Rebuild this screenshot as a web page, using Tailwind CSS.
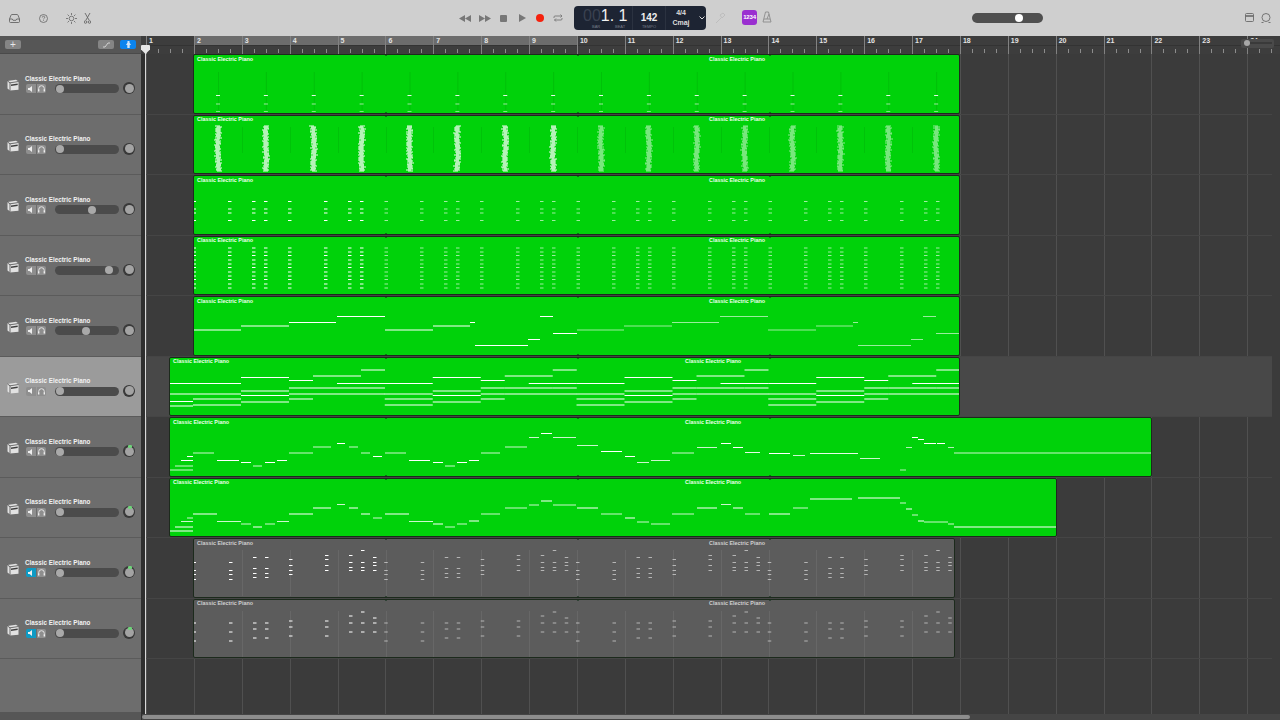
<!DOCTYPE html>
<html lang="en">
<head>
    <meta charset="UTF-8">
    <meta name="viewport" content="width=device-width, initial-scale=1.0">
    <title>GarageBand - Classic Electric Piano</title>
    <script src="https://cdn.jsdelivr.net/npm/@tailwindcss/browser@4"></script>
</head>
<body class="bg-[#3b3b3b] font-['Liberation_Sans',Arial,sans-serif] overflow-hidden">

<div class="w-[1280px] h-[720px] flex flex-col overflow-hidden">

    <!-- Top toolbar -->
    <header class="h-9 shrink-0 bg-[#cfcfcf] flex items-center relative">
        <div class="flex items-center text-[#666]">
            <svg class="ml-[9px]" width="11" height="9" viewBox="0 0 11 9" fill="none" stroke="currentColor" stroke-width="0.9"><path d="M.5 5 2 1.2Q2.3.5 3 .5h5q.7 0 1 .7L10.5 5v2.500q0 1-1 1h-8q-1 0-1-1Z"/><path d="M.5 5h2.800l.7 1.300h3L7.700 5h2.800"/></svg>
            <svg class="ml-[19px]" width="9" height="9" viewBox="0 0 9 9" fill="none" stroke="currentColor" stroke-width="0.8"><circle cx="4.500" cy="4.500" r="4"/><path d="M3.300 3.500Q3.400 2.200 4.500 2.200T5.700 3.400Q5.700 4 4.900 4.500 4.500 4.800 4.500 5.400M4.500 6.300v.7"/></svg>
            <svg class="ml-[18px]" width="11" height="11" viewBox="0 0 11 11" fill="none" stroke="currentColor" stroke-width="0.8"><circle cx="5.500" cy="5.500" r="2.300"/><path d="M5.500 0v2M5.500 9v2M0 5.500h2M9 5.500h2M1.600 1.600 3 3M8 8l1.400 1.400M1.600 9.400 3 8M8 3l1.400-1.400"/></svg>
            <svg class="ml-[7px]" width="7" height="11" viewBox="0 0 7 11" fill="none" stroke="currentColor" stroke-width="0.9"><path d="M1 0 5 7M6 0 2 7"/><circle cx="1.500" cy="9" r="1.300"/><circle cx="5.500" cy="9" r="1.300"/></svg>
        </div>

        <!-- Transport -->
        <div class="absolute left-[459px] top-0 h-9 flex items-center">
            <svg class="mr-[8px]" width="12" height="7" viewBox="0 0 12 7" fill="#777"><path d="M6 0v7L0 3.500ZM12 0v7L6 3.500Z"/></svg>
            <svg class="mr-[9px]" width="12" height="7" viewBox="0 0 12 7" fill="#777"><path d="M0 0v7l6-3.500ZM6 0v7l6-3.500Z"/></svg>
            <div class="w-[7px] h-[7px] bg-[#777] rounded-[1px] mr-[12px]"></div>
            <svg class="mr-[10px]" width="7" height="8" viewBox="0 0 7 8" fill="#777"><path d="M0 0v8l7-4Z"/></svg>
            <div class="w-2 h-2 bg-[#f5210d] rounded-full mr-[9px]"></div>
            <svg width="10" height="8" viewBox="0 0 10 8" fill="none" stroke="#777" stroke-width="0.9"><path d="M1 4V3q0-1 1-1h6.500M7.500.5 9 2 7.500 3.500M9 4v1q0 1-1 1H1.500M3 4.500 1.500 6 3 7.500"/></svg>
        </div>

        <!-- LCD -->
        <div class="absolute left-[574px] top-[6px] w-[132px] h-6 rounded-[4px] bg-[#1d2433] flex text-white">
            <div class="w-[59px] relative border-r border-[#2b3240]">
                <div class="absolute left-[9px] top-[1px] text-[16px] leading-[18px] whitespace-nowrap"><span class="text-[#3a4150]">00</span><span class="text-[#f1f1f1]">1. 1</span></div>
                <span class="absolute left-[18px] bottom-[1px] text-[4px] leading-[5px] text-[#757b88]">BAR</span>
                <span class="absolute left-[41px] bottom-[1px] text-[4px] leading-[5px] text-[#757b88]">BEAT</span>
            </div>
            <div class="w-[33px] relative border-r border-[#2b3240] text-center">
                <div class="text-[10px] leading-[11px] mt-[6px] font-bold text-[#eee]">142</div>
                <div class="text-[4px] leading-[5px] mt-[1px] text-[#757b88]">TEMPO</div>
            </div>
            <div class="w-[30px] text-center text-[7px] leading-[9px] mt-[2px] font-bold text-[#ddd]">
                <div>4/4</div>
                <div class="mt-px">Cmaj</div>
            </div>
            <svg class="mt-[10px] ml-[3px]" width="6" height="4" viewBox="0 0 6 4" fill="none" stroke="#ddd" stroke-width="1"><path d="M.5.5 3 3 5.500.5"/></svg>
        </div>

        <svg class="absolute left-[715px] top-[12px]" width="11" height="12" viewBox="0 0 11 12" fill="none" stroke="#bbb" stroke-width="0.9"><path d="M1 11 6 6M5 3l3-2 2 2-3 3Z"/></svg>
        <div class="absolute left-[742px] top-[10px] w-[15px] h-[15px] rounded-[3px] bg-[#9a2fd0] flex items-center justify-center text-[6px] font-bold text-white tracking-tight">1234</div>
        <svg class="absolute left-[762px] top-[11px]" width="10" height="12" viewBox="0 0 10 12" fill="none" stroke="#8b8b8b" stroke-width="0.9"><path d="M3.500 1h3L9 11H1ZM2 8h6M5 8l2-5"/></svg>

        <!-- Master volume -->
        <div class="absolute left-[972px] top-[13px] w-[71px] h-[10px] rounded-full bg-[#4f4f4f]">
            <div class="absolute left-[43px] top-[1px] w-2 h-2 rounded-full bg-white"></div>
        </div>

        <svg class="absolute left-[1245px] top-[13px]" width="9" height="9" viewBox="0 0 9 9" fill="none" stroke="#6a6a6a" stroke-width="0.9"><rect x=".5" y=".5" width="8" height="8" rx="1"/><path d="M.5 3h8" stroke-width="1.600"/></svg>
        <svg class="absolute left-[1261px] top-[13px]" width="10" height="10" viewBox="0 0 10 10" fill="none" stroke="#6a6a6a" stroke-width="0.9"><circle cx="5" cy="4.500" r="4"/><path d="M.5 9.500h2M7.500 9.500h2"/></svg>
    </header>

    <main class="flex-1 flex min-h-0">

        <!-- Track headers -->
        <aside class="w-[141px] shrink-0 bg-[#6d6d6d] flex flex-col">
            <div class="h-[18px] shrink-0 bg-[#565656] flex items-center border-b border-[#4a4a4a]">
                <div class="ml-[5px] w-4 h-[9px] rounded-[2px] bg-[#858585] text-[#e8e8e8] text-[10px] leading-[9px] text-center">+</div>
                <div class="ml-[77px] w-4 h-[9px] rounded-[2px] bg-[#858585] flex items-center justify-center">
                    <svg width="9" height="6" viewBox="0 0 9 6" fill="none" stroke="#e5e5e5" stroke-width="0.8"><path d="M1 5h2l3-4h2"/></svg>
                </div>
                <div class="ml-[6px] w-4 h-[9px] rounded-[2px] bg-[#0a84ee] flex items-center justify-center">
                    <svg width="7" height="7" viewBox="0 0 7 7" fill="#cfe4f7"><path d="M2.500 0h2v1.500L6 4H4.700v3H2.300V4H1l1.500-2.500Z"/></svg>
                </div>
            </div>
            <div id="trackHeaders" class="flex-1 min-h-0"></div>
            <div class="h-2 shrink-0 bg-[#565656]"></div>
        </aside>

        <!-- Timeline -->
        <section class="flex-1 relative flex flex-col min-w-0">
            <!-- Ruler -->
            <div class="h-[18px] shrink-0 bg-[#3d3d3d] relative overflow-hidden">
                <div class="absolute left-[53px] top-0 w-[383px] h-[9px] bg-[#6c6c6c]"></div>
                <div class="absolute left-0 right-0 top-[9px] h-px bg-[#333]"></div>
                <div id="ruler" class="absolute left-[5px] top-0 flex h-full"></div>
                <!-- Zoom slider over the ruler -->
                <div class="absolute left-[1100px] top-[3px] w-[33px] h-[9px] rounded-[2px] bg-[#4a4a4a]">
                    <div class="absolute left-[9px] top-[3px] w-[22px] h-[2px] bg-[#3a3a3a]"></div>
                    <div class="absolute left-[3px] top-[1px] w-[6px] h-[6px] rounded-full bg-[#a8a8a8]"></div>
                </div>
            </div>

            <!-- Arrange area -->
            <div class="flex-1 relative bg-[#3b3b3b] min-h-0 overflow-hidden">
                <div id="gridLines" class="absolute left-[5px] top-0 bottom-0 flex"></div>
                <div id="lanes" class="relative w-[1131px]"></div>
                <div class="absolute left-0 top-0 bottom-0 w-[4.500px] bg-[#2f2f2f]"></div>
                <div class="absolute left-[1px] right-0 bottom-0 h-[6px] bg-[#454545]">
                    <div class="absolute left-0 top-[1px] w-[828px] h-1 rounded-full bg-[#8d8d8d]"></div>
                </div>
            </div>

            <!-- Playhead -->
            <div class="absolute left-[4px] top-[9px] bottom-[6px] w-px bg-[#d8d8d8]"></div>
            <svg class="absolute left-0 top-[9px]" width="9" height="9" viewBox="0 0 9 9" fill="#e6e6e6"><path d="M0 1q0-1 1-1h7q1 0 1 1v3.500L4.500 9 0 4.500Z"/></svg>
        </section>
    </main>
</div>

<script>
    const BAR = 47.875;
    const ROW = 60.5;
    const TOP = 54;
    const knobs = [60, 60, 92, 109, 86, 60, 60, 60, 60, 60];

    // Track headers
    const pianoIcon = `<svg width="12" height="12" viewBox="0 0 12 12"><path d="M.5 2 9 .8l2.500 1.700v8.200L3 11.500.5 9.500Z" fill="#e2e2e2"/><path d="M3 3.800 11.500 2.500M3 3.800v7.700M.5 2 3 3.800" stroke="#3a3a3a" stroke-width="0.7" fill="none"/><path d="M4 5.500 10.700 4.600V6L4 7Z" fill="#3f3f3f"/></svg>`;
    const muteIcon = (c) => `<svg width="6" height="6" viewBox="0 0 6 6" fill="${c}"><path d="M0 2h1.500L4 0v6L1.500 4H0Z"/></svg>`;
    const phones = `<svg width="7" height="7" viewBox="0 0 7 7" fill="none" stroke="#eee" stroke-width="0.9"><path d="M.7 5V3.500a2.800 2.800 0 0 1 5.600 0V5"/><path d="M.7 4.500v2M6.300 4.500v2" stroke-width="1.400"/></svg>`;

    document.getElementById('trackHeaders').innerHTML = knobs.map((knob, i) => {
        const selected = i === 5;
        const pan = i >= 6;
        const muted = i >= 8;
        return `
        <div class="h-[60.5px] relative border-b border-[#5b5b5b] ${selected ? 'bg-[#9b9b9b]' : ''}">
            <div class="absolute left-[7px] top-[25px]">${pianoIcon}</div>
            <div class="absolute left-[25px] top-[20.500px] text-[6.300px] leading-[8px] font-bold text-[#f2f2f2] whitespace-nowrap">Classic Electric Piano</div>
            <div class="absolute left-[26px] top-[30px] w-[20px] h-[9px] flex rounded-[2px] overflow-hidden">
                <div class="w-[10px] flex items-center justify-center ${muted ? 'bg-[#0e9ac4]' : 'bg-[#8e8e8e]'}">${muteIcon('#eee')}</div>
                <div class="w-[10px] ml-px flex items-center justify-center bg-[#8e8e8e]">${phones}</div>
            </div>
            <div class="absolute left-[55px] top-[30px] w-[64px] h-[9px] rounded-full bg-[#4b4b4b]">
                <div class="absolute top-[0.500px] w-2 h-2 rounded-full bg-[#a9a9a9]" style="left:${knob - 59}px"></div>
            </div>
            <div class="absolute left-[123px] top-[28px] w-[12px] h-[12px] rounded-full bg-[#393939] flex items-center justify-center">
                <div class="w-[9px] h-[9px] rounded-full bg-[#a3a3a3]"></div>
                ${pan ? '<div class="absolute left-[5px] top-0 w-[4px] h-[3px] rounded-[1px] bg-[#6fd47a]"></div>' : ''}
            </div>
        </div>`;
    }).join('');

    // Ruler and bar lines
    let ruler = '', grid = '';
    for (let bar = 1; bar <= 24; bar++) {
        ruler += `
        <div class="w-[47.875px] shrink-0 relative border-l border-[#828282] h-full">
            <span class="absolute left-[2px] top-[0.500px] text-[7px] leading-[8px] font-bold text-[#e4e4e4]">${bar}</span>
            <div class="absolute left-[11px] bottom-[1px] w-px h-1 bg-[#8c8c8c]"></div>
            <div class="absolute left-[23px] bottom-[1px] w-px h-1 bg-[#8c8c8c]"></div>
            <div class="absolute left-[35px] bottom-[1px] w-px h-1 bg-[#8c8c8c]"></div>
        </div>`;
        grid += `<div class="w-[47.875px] shrink-0 border-l border-[#505050]"></div>`;
    }
    document.getElementById('ruler').innerHTML = ruler;
    document.getElementById('gridLines').innerHTML = grid;

    // Notes as [x1, x2, y, opacity] in page pixels
    const repeat = (xs, ys, period, count, w = 3.500) => {
        const out = [];
        for (let c = 0; c < count; c++) {
            xs.forEach(x => ys.forEach(y => out.push([x + c * period, x + c * period + w, y, c === 0 ? 1 : 0.62])));
        }
        return out;
    };
    const clusterX = [192.5, 228, 252, 264, 288, 324, 348, 360];

    const track1 = [];
    for (let i = 0; i < 16; i++) {
        const x = 216 + i * BAR;
        track1.push([x, x + 4, 95, 0.9], [x, x + 4, 103.5, 0.6], [x, x + 4, 111, 0.5]);
    }

    const track2 = [];
    for (let i = 0; i < 16; i++) {
        for (let y = 125; y < 171; y++) {
            // mostly straight stack of notes with a little jitter
            const wob = Math.sin(y * 0.16 + i * 1.7) * 0.5 + Math.sin(y * 2.3 + i * 3) * 0.9 + Math.sin(y * 5.1 + i) * 0.5;
            const x = Math.round(215.5 + i * BAR + wob);
            track2.push([x, x + 5, y, i < 8 ? 0.92 : 0.55]);
        }
    }

    const track3 = repeat(clusterX, [201, 208.5, 212.5, 220], 192, 4);
    const track4 = repeat(clusterX, [247, 251, 254.5, 259, 263, 266.5, 271, 275, 278.5, 283, 287], 192, 4);

    const melody5 = [[194, 241, 329.5], [241, 289, 325.5], [289, 336, 322], [337, 385, 316], [385, 433, 329.5], [433, 470, 325.5], [470, 475, 322], [475, 528, 345], [528, 540, 339], [540, 553, 316], [553, 577, 333]];
    const track5 = melody5.flatMap(n => [[n[0], n[1], n[2], 1], [n[0] + 383, Math.min(n[1] + 383, 960), n[2], 0.6]]);

    const chords6 = [[193, 241, 382.5], [193, 241, 393], [193, 241, 398], [193, 241, 404], [241, 289, 376.5], [241, 289, 390], [241, 289, 394.5], [241, 289, 401], [289, 313, 379.5], [289, 313, 387], [289, 313, 393], [289, 313, 398], [313, 361, 375], [313, 361, 387], [313, 385, 393], [337, 385, 382.5], [361, 385, 369], [361, 385, 387]];
    const track6 = [[170, 193, 382.5, 1], [170, 193, 393, 1], [170, 193, 400.5, 1], [170, 193, 405, 1]];
    for (let c = 0; c < 4; c++) chords6.forEach(n => track6.push([n[0] + c * 191.75, Math.min(n[1] + c * 191.75, 960), n[2], 1]));

    const track7 = [[170, 193, 469.5, .8], [175, 193, 465.5, .8], [181, 193, 460, 1], [187, 193, 456, 1], [193, 214, 452.5, .8], [217, 239, 460, 1], [241, 251, 462, 1], [253, 262, 465.5, .8], [265, 275, 462, 1], [277, 287, 460, 1], [289, 313, 452.5, .8], [313, 331, 446.5, .8], [337, 345, 443, 1], [349, 358, 446.5, .8], [361, 370, 452.5, .8], [373, 382, 456, 1], [385, 406, 452.5, .8], [409, 430, 460, 1], [433, 443, 462, 1], [445, 455, 465.5, .8], [457, 467, 462, 1], [469, 479, 460, 1], [481, 500, 452.5, .8], [505, 527, 446.5, .8], [529, 539, 437, .8], [541, 552, 433, 1], [553, 576, 437, .8], [577, 598, 445, .8], [601, 622, 451, 1], [625, 635, 456, 1], [637, 649, 462, .8], [651, 670, 460, .8], [672, 694, 452.5, .8], [697, 717, 447, .8], [721, 731, 443, 1], [733, 743, 447, 1], [745, 760, 452, .9], [769, 790, 453, 1], [793, 805, 455, .8], [810, 858, 453, .9], [860, 880, 458, .8], [900, 906, 469.5, .7], [906, 912, 447, .7], [912, 918, 437, 1], [918, 924, 439, 1], [924, 936, 443, 1], [937, 945, 443, 1], [948, 954, 447, .7], [954, 1151, 452.5, .8]];

    const track8 = [[170, 193, 530, 1], [175, 193, 526, 1], [181, 193, 520.5, .8], [187, 193, 517, .8], [193, 217, 513, 1], [217, 241, 520.5, .8], [241, 251, 523, .8], [253, 262, 526, 1], [265, 275, 523, .8], [277, 289, 520.5, .8], [289, 313, 513, 1], [313, 331, 507, 1], [337, 345, 503.5, .8], [349, 358, 507, 1], [361, 370, 513, 1], [373, 382, 517, .8], [385, 409, 513, 1], [409, 433, 520.5, .8], [433, 443, 523, 1], [445, 455, 526, .8], [457, 467, 523, .8], [469, 479, 520, 1], [481, 500, 513, .8], [505, 527, 507, .8], [529, 539, 504, .8], [541, 552, 500, 1], [553, 576, 504, .8], [577, 598, 507, 1], [601, 622, 513, .8], [625, 635, 517, 1], [637, 649, 521, .8], [651, 670, 523, .8], [672, 694, 513, .8], [697, 717, 507, 1], [721, 731, 503.5, .8], [733, 743, 507, 1], [745, 760, 513, .8], [769, 790, 513, 1], [793, 808, 507, .8], [810, 852, 498, 1], [858, 900, 497, 1], [900, 906, 502, .8], [906, 912, 508, 1], [912, 918, 514, .8], [918, 924, 520, 1], [924, 948, 521, .8], [948, 954, 523, .8], [954, 1056, 526, 1]];

    const clusters9 = [[192.5, [562, 570, 574, 579]], [229, [562, 570, 574, 579]], [253, [557, 568, 573, 577]], [265, [557, 568, 573, 577]], [289, [559, 565, 570, 574]], [325, [555, 559, 565, 570]], [349, [555, 562, 567, 570]], [361, [550, 562, 567, 570]], [373, [557, 562, 565, 570]]];
    const clusters10 = [[192.5, [622, 631, 640]], [229, [622, 631, 640]], [253, [622, 628, 637]], [265, [622, 628, 637]], [289, [620, 626, 635]], [325, [620, 626, 635]], [349, [615, 622, 631]], [361, [611, 622, 631]], [373, [617, 622, 631]]];
    const spread = (clusters) => {
        const out = [];
        for (let c = 0; c < 4; c++) {
            clusters.forEach(([x, ys]) => ys.forEach(y => {
                const nx = x + c * 191.75;
                if (nx < 950) out.push([nx, nx + 3.5, y, c === 0 ? 1 : 0.55]);
            }));
        }
        return out;
    };

    const regions = [
        { x: 194, end: 960, label2: 709, notes: track1, stems: true },
        { x: 194, end: 960, label2: 709, notes: track2, faint: true },
        { x: 194, end: 960, label2: 709, notes: track3 },
        { x: 194, end: 960, label2: 709, notes: track4 },
        { x: 194, end: 960, label2: 709, notes: track5 },
        { x: 170, end: 960, label2: 685, notes: track6 },
        { x: 170, end: 1151.5, label2: 685, notes: track7 },
        { x: 170, end: 1056.5, label2: 685, notes: track8 },
        { x: 194, end: 954.5, label2: 709, notes: spread(clusters9), muted: true },
        { x: 194, end: 954.5, label2: 709, notes: spread(clusters10), muted: true },
    ];

    document.getElementById('lanes').innerHTML = regions.map((r, i) => {
        const top = TOP + i * ROW;
        const w = r.end - r.x;
        const rows = r.notes.map(n => `<rect x="${n[0]}" y="${n[2]}" width="${n[1] - n[0]}" height="1" fill="#fff" opacity="${n[3]}"/>`).join('');
        let lines = '';
        if (r.muted || r.faint) {
            for (let b = 1; b < 17; b++) {
                const lx = Math.round(194 + b * BAR);
                if (lx < r.end) lines += `<rect x="${lx}" y="${top + 12}" width="1" height="${r.muted ? 46 : 26}" fill="${r.muted ? '#fff' : '#00a808'}" opacity="${r.muted ? 0.07 : 0.35}"/>`;
            }
        }
        const stems = r.stems ? Array.from({ length: 16 }, (_, b) => `<rect x="${218 + b * BAR}" y="72" width="1" height="38" fill="#00a808" opacity="0.4"/>`).join('') : '';
        let marks = '';
        [386, 578, 770].forEach(m => { marks += `<rect x="${m - 1.5}" y="${top - 1.5}" width="3" height="3" fill="#10301a" transform="rotate(45 ${m} ${top})"/><rect x="${m - 1.5}" y="${top + 58.5}" width="3" height="3" fill="#10301a" transform="rotate(45 ${m} ${top + 60})"/>`; });
        const title = r.muted ? 'text-[#cfcfcf]' : 'text-[#eaffea]';
        return `
        <div class="h-[60.5px] relative border-b border-[#454545] ${i === 5 ? 'bg-[#484848]' : ''}">
            <div class="absolute top-0 bottom-0 rounded-[2px] border border-[#1c2a1c] overflow-hidden ${r.muted ? 'bg-[#5c5c5c]' : 'bg-[#00d20a]'}" style="left:${r.x - 142}px;width:${w + 1}px">
                <span class="absolute left-[3px] top-[0.500px] text-[5.400px] leading-[7px] font-bold whitespace-nowrap ${title}">Classic Electric Piano</span>
                <span class="absolute top-[0.500px] text-[5.400px] leading-[7px] font-bold whitespace-nowrap ${title}" style="left:${r.label2 - r.x}px">Classic Electric Piano</span>
                <svg class="absolute" style="left:0;top:-1px" width="${w}" height="61" viewBox="${r.x} ${top} ${w} 61">${lines}${stems}${rows}${marks}</svg>
            </div>
        </div>`;
    }).join('');
</script>

</body>
</html>
